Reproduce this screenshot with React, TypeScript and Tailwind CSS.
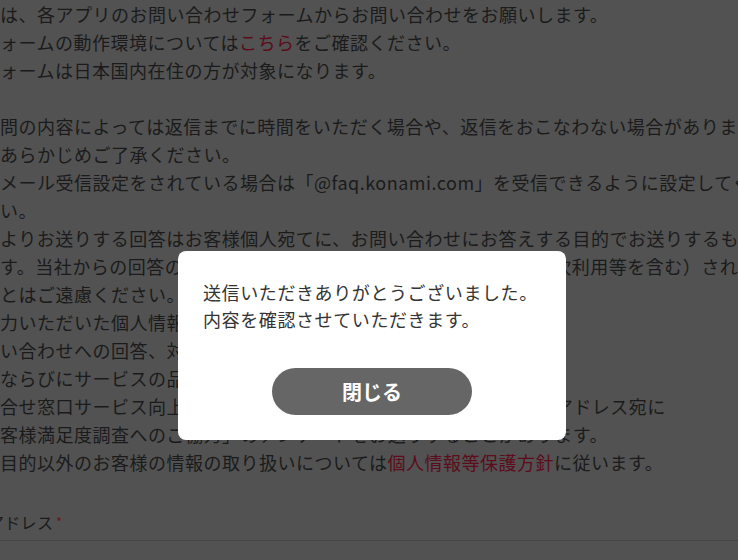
import React from 'react';

const font = { fontFamily: '"Noto Sans CJK JP", "Noto Sans", sans-serif' };

const Link: React.FC<{ children: React.ReactNode }> = ({ children }) => (
  <span className="text-[#5c0c1a]">{children}</span>
);

const App: React.FC = () => {
  return (
    <div className="relative h-[560px] w-full overflow-hidden bg-[#525252]" style={font}>
      {/* page content (dimmed behind the dialog) */}
      <div className="text-[18px] leading-[28px] tracking-[0.5px] text-[#1b1b1b] whitespace-nowrap">
        <p>は、各アプリのお問い合わせフォームからお問い合わせをお願いします。</p>
        <p>ォームの動作環境については<Link>こちら</Link>をご確認ください。</p>
        <p>ォームは日本国内在住の方が対象になります。</p>
        <p className="mt-[28px]">問の内容によっては返信までに時間をいただく場合や、返信をおこなわない場合がありますので、</p>
        <p>あらかじめご了承ください。</p>
        <p>メール受信設定をされている場合は「@faq.konami.com」を受信できるように設定してください。</p>
        <p>い。</p>
        <p>よりお送りする回答はお客様個人宛てに、お問い合わせにお答えする目的でお送りするものです。</p>
        <p>す。当社からの回答の一部または全部を、第三者に転載・公開（二次利用等を含む）されること</p>
        <p>とはご遠慮ください。</p>
        <p>力いただいた個人情報は、以下の目的で利用いたします。</p>
        <p>い合わせへの回答、対応のため</p>
        <p>ならびにサービスの品質向上のため</p>
        <p>合せ窓口サービス向上のため、お客様よりご入力いただいたメールアドレス宛に</p>
        <p>客様満足度調査へのご協力」のアンケートをお送りすることがあります。</p>
        <p>目的以外のお客様の情報の取り扱いについては<Link>個人情報等保護方針</Link>に従います。</p>

        <div className="mt-[32px] -ml-[12px] text-[16px] leading-[28px] tracking-[0.3px]">
          アドレス<span className="ml-[3px] align-top text-[12px] text-[#6e1020]">*</span>
        </div>
        <div className="mt-[4px] h-[30px] border-t border-[#474747]" />
      </div>

      {/* dialog */}
      <div className="absolute inset-0 flex items-start justify-center pt-[251px] pl-[6px]">
        <div className="w-[388px] rounded-[8px] bg-white px-[25px] pt-[28px] pb-[25px]">
          <div className="text-[18px] leading-[27px] tracking-[0.6px] text-[#333] whitespace-nowrap">
            <p>送信いただきありがとうございました。</p>
            <p>内容を確認させていただきます。</p>
          </div>
          <button className="mx-auto mt-[35px] flex h-[47px] w-[200px] items-center justify-center rounded-full bg-[#666666] text-[20px] font-bold text-white">
            閉じる
          </button>
        </div>
      </div>
    </div>
  );
};

export default App;
